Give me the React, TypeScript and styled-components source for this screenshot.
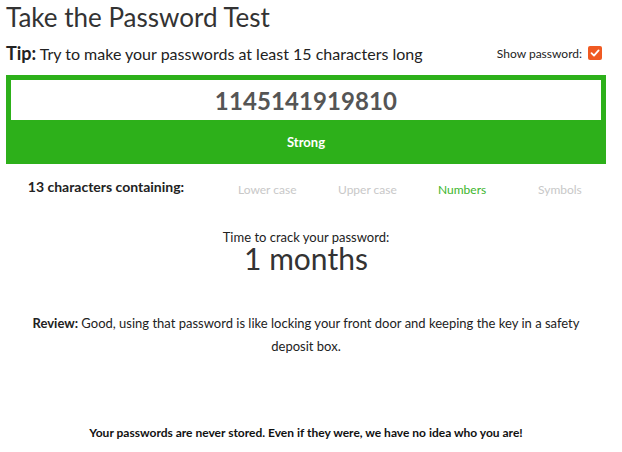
import styled, { createGlobalStyle } from "styled-components"

const GlobalStyle = createGlobalStyle`
  body {
    margin: 0;
    background: #fff;
    font-family: Lato, "Open Sans", sans-serif;
    color: #222;
  }
`

const Page = styled.div`
  width: 600px;
  padding: 0 6px;
`

const Title = styled.h1`
  margin: 0;
  padding-top: 2px;
  font-size: 26px;
  font-weight: 400;
  line-height: 30px;
  color: #333;
`

const TipRow = styled.div`
  display: flex;
  align-items: center;
  justify-content: space-between;
  margin-top: 6px;
  height: 30px;
`

const Tip = styled.p`
  margin: 0;
  font-size: 16px;
  color: #222;
  b {
    font-size: 18px;
    font-weight: 700;
  }
`

const ShowToggle = styled.label`
  display: flex;
  align-items: center;
  gap: 6px;
  font-size: 12px;
  color: #222;
  margin-right: 4px;
`

const CheckBox = styled.span`
  width: 14px;
  height: 14px;
  border-radius: 2px;
  background: #f05a22;
  display: flex;
  align-items: center;
  justify-content: center;
`

const StrengthBox = styled.div<{ $color: string }>`
  margin-top: 7px;
  background: ${p => p.$color};
  padding: 5px 5px 0;
`

const PasswordField = styled.div`
  height: 40px;
  background: #fff;
  display: flex;
  align-items: center;
  justify-content: center;
  font-size: 24px;
  font-weight: 700;
  color: #555;
  letter-spacing: 0.1px;
`

const StrengthLabel = styled.div`
  height: 44px;
  display: flex;
  align-items: center;
  justify-content: center;
  color: #fff;
  font-size: 13px;
  font-weight: 700;
`

const CharRow = styled.div`
  display: grid;
  grid-template-columns: 200px repeat(4, 100px);
  align-items: baseline;
  margin-top: 14px;
`

const CharCount = styled.div`
  text-align: center;
  font-size: 14px;
  font-weight: 700;
  color: #222;
`

const CharType = styled.div<{ $on: boolean }>`
  padding-left: 32px;
  font-size: 12px;
  color: ${p => (p.$on ? "#3cb52c" : "#c8c8c8")};
  position: relative;
  top: 2px;
`

const Crack = styled.div`
  margin-top: 35px;
  text-align: center;
  color: #222;
`

const CrackLabel = styled.div`
  font-size: 13px;
  line-height: 15px;
`

const CrackTime = styled.div`
  font-size: 30px;
  line-height: 26px;
  color: #333;
`

const Review = styled.p`
  margin: 41px 24px 0;
  text-align: center;
  font-size: 13px;
  line-height: 23px;
  color: #222;
`

const Footer = styled.p`
  margin: 67px 0 0;
  text-align: center;
  font-size: 12px;
  font-weight: 700;
  color: #111;
`

const types = [
  { name: "Lower case", on: false },
  { name: "Upper case", on: false },
  { name: "Numbers", on: true },
  { name: "Symbols", on: false },
]

export default function App() {
  return (
    <Page>
      <GlobalStyle />
      <Title>Take the Password Test</Title>
      <TipRow>
        <Tip>
          <b>Tip:</b> Try to make your passwords at least 15 characters long
        </Tip>
        <ShowToggle>
          Show password:
          <CheckBox>
            <svg width="10" height="10" viewBox="0 0 10 10">
              <path d="M1.5 5.2 L4 7.6 L8.6 2.4" fill="none" stroke="#fff" strokeWidth="1.8" strokeLinecap="round" strokeLinejoin="round" />
            </svg>
          </CheckBox>
        </ShowToggle>
      </TipRow>
      <StrengthBox $color="#2db01a">
        <PasswordField>1145141919810</PasswordField>
        <StrengthLabel>Strong</StrengthLabel>
      </StrengthBox>
      <CharRow>
        <CharCount>13 characters containing:</CharCount>
        {types.map(t => (
          <CharType key={t.name} $on={t.on}>{t.name}</CharType>
        ))}
      </CharRow>
      <Crack>
        <CrackLabel>Time to crack your password:</CrackLabel>
        <CrackTime>1 months</CrackTime>
      </Crack>
      <Review>
        <b>Review:</b> Good, using that password is like locking your front door and keeping the key in a safety deposit box.
      </Review>
      <Footer>Your passwords are never stored. Even if they were, we have no idea who you are!</Footer>
    </Page>
  )
}
